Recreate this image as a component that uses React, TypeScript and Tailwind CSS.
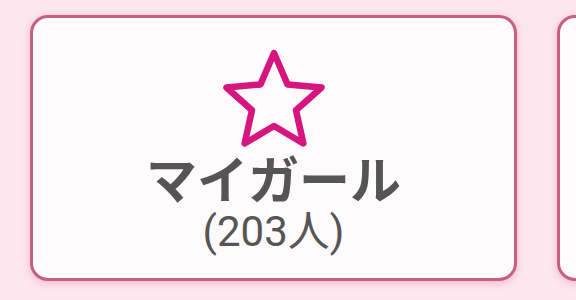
import { ReactNode } from 'react';

function StarOutline() {
  return (
    <svg width="110" height="106" viewBox="0 0 110 106" fill="none">
      <polygon
        points="55,5 68.5,36.4 102.55,39.55 77,62.2 84.39,95.45 55,78 25.61,95.45 33,62.2 7.45,39.55 41.5,36.4"
        stroke="#d6157f"
        strokeWidth="6.5"
        strokeLinejoin="round"
      />
    </svg>
  );
}

function Card({ children }: { children?: ReactNode }) {
  return (
    <div className="flex h-[266px] w-[487px] shrink-0 flex-col items-center rounded-[18px] border-[3px] border-[#c6607f] bg-[#fffafc] shadow-[0_2px_8px_rgba(214,96,130,0.35)]">
      {children}
    </div>
  );
}

export default function App() {
  return (
    <div
      className="flex h-[300px] w-[576px] gap-[40px] overflow-hidden bg-[#fde7ef] pl-[30px] pt-[15px]"
      style={{ fontFamily: "Roboto, 'Noto Sans CJK JP', sans-serif" }}
    >
      <Card>
        <div className="pt-[30px]">
          <StarOutline />
        </div>
        <div className="mt-[1px] text-[51px] font-bold leading-[54px] text-[#555555]">マイガール</div>
        <div className="text-[42px] leading-[46px] text-[#555555]">(203人)</div>
      </Card>
      <Card />
    </div>
  );
}
